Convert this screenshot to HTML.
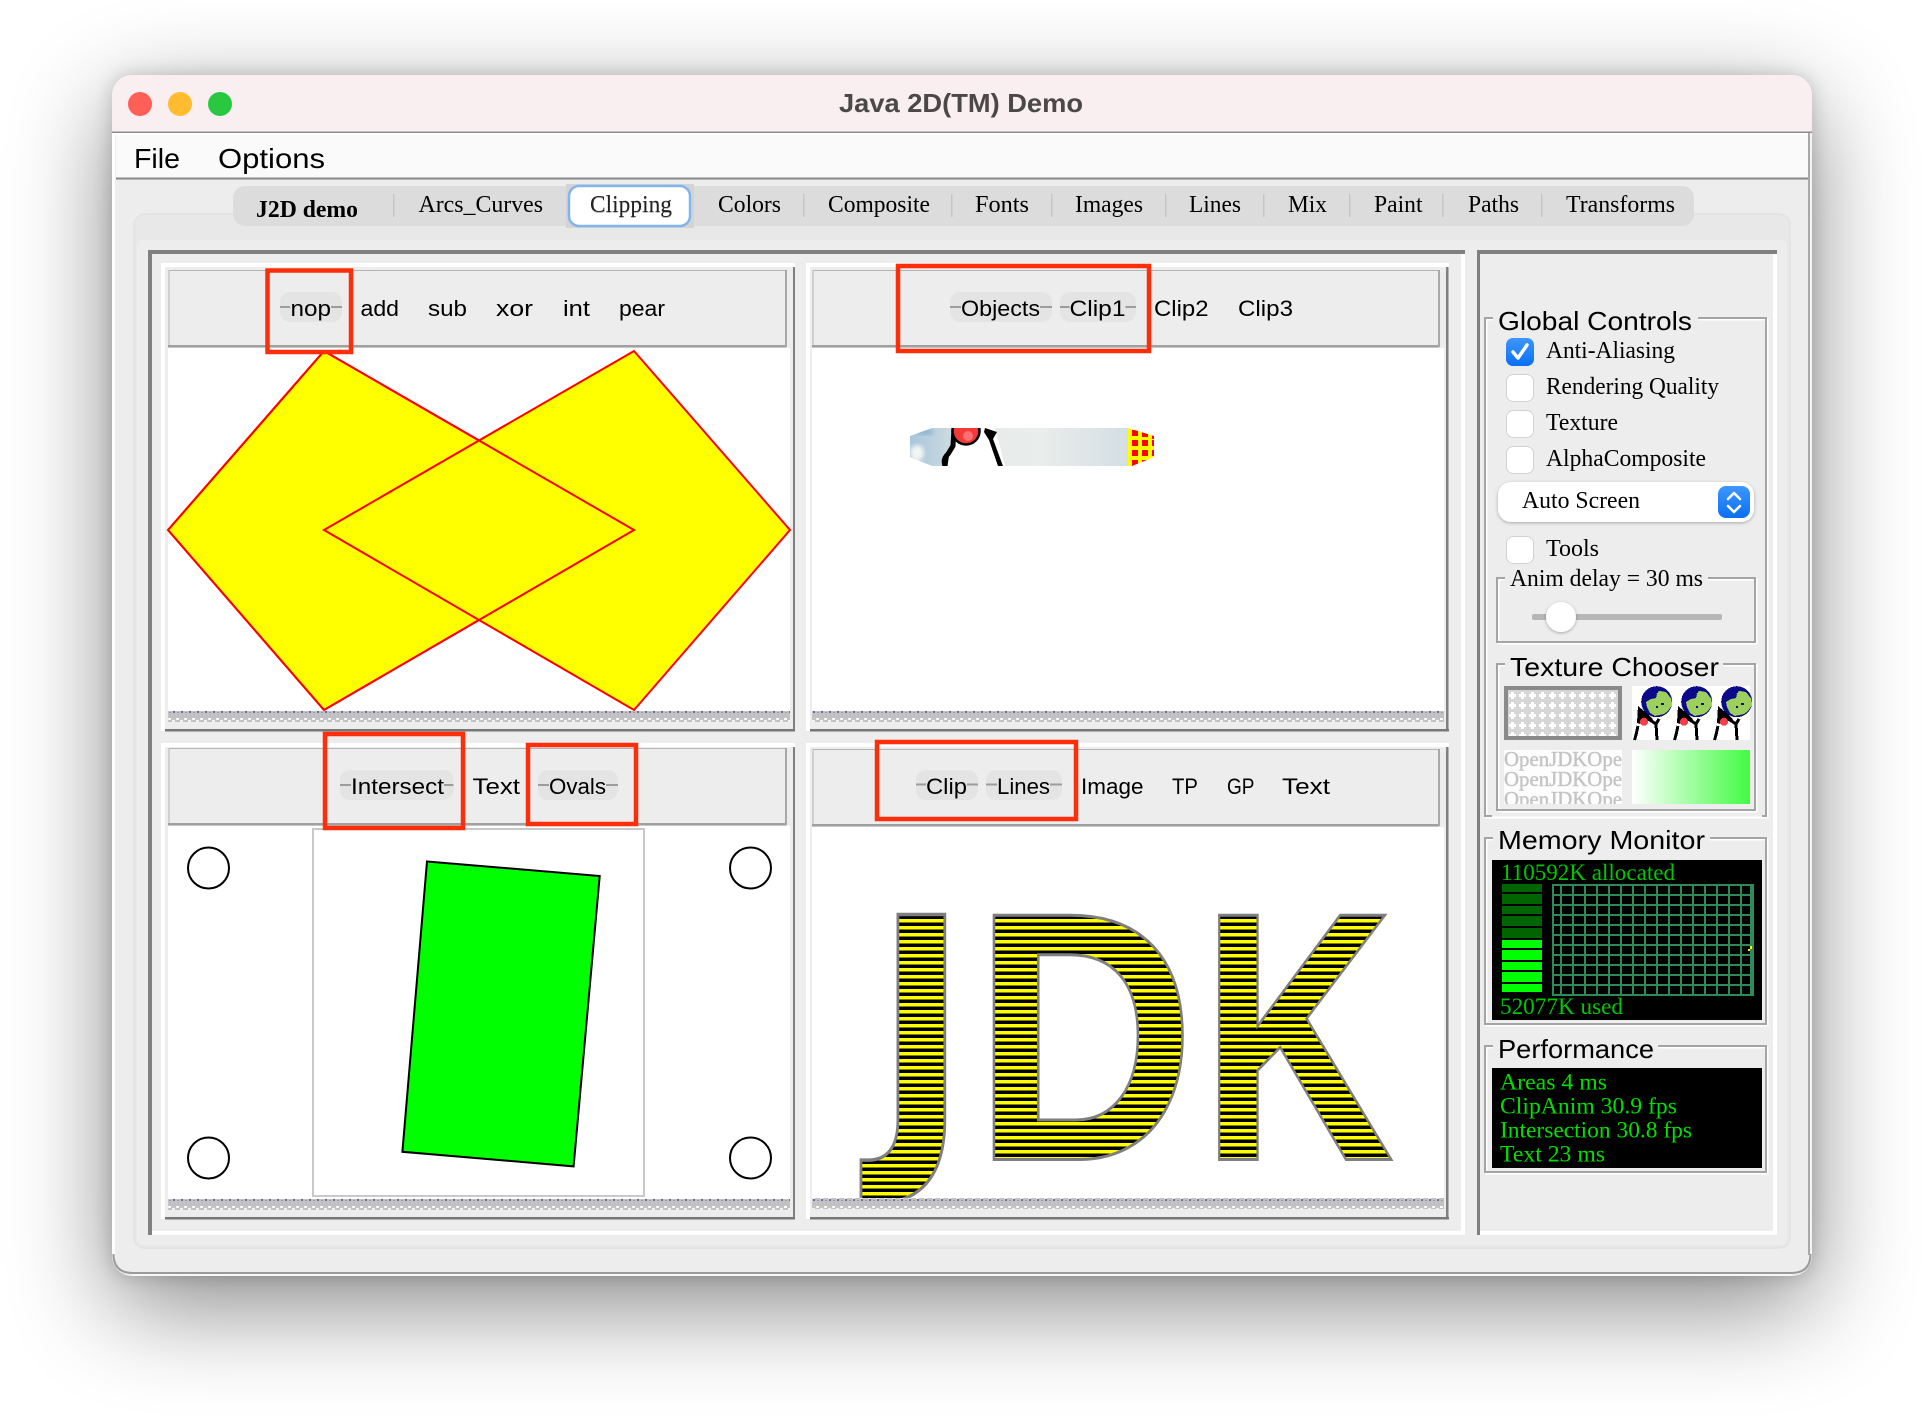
<!DOCTYPE html>
<html><head><meta charset="utf-8"><title>Java 2D(TM) Demo</title>
<style>
html,body{margin:0;padding:0;background:#fff;width:1924px;height:1424px;overflow:hidden}
#win{position:absolute;left:112px;top:75px;width:1700px;height:1201px;border-radius:20px;background:#ededed;box-shadow:0 30px 100px rgba(0,0,0,.47),0 0 18px rgba(0,0,0,.18)}
svg{position:absolute;left:0;top:0}
text{white-space:pre}
.s{font-family:"Liberation Sans",sans-serif;fill:#000}
.r{font-family:"Liberation Serif",serif;fill:#000}
.t{font-size:24px}
.b{font-size:22.5px}
.g{font-size:26px}
.c{font-size:24px}
.gr{font-size:23px;fill:#00c800}
.pf{font-size:23px;fill:#00e000}
.dj{font-family:"DejaVu Sans",sans-serif;font-weight:bold}
</style></head><body>
<div id="win"></div>
<svg width="1924" height="1424" viewBox="0 0 1924 1424" xmlns="http://www.w3.org/2000/svg">
<defs>
<pattern id="bar" patternUnits="userSpaceOnUse" x="168" y="0" width="8" height="11">
<rect width="8" height="11" fill="#c2c2c2"/>
<rect x="0" y="3" width="3" height="2" fill="#fff"/><rect x="4" y="5" width="3" height="2" fill="#f2f2f2"/>
<rect x="5" y="7" width="2" height="2" fill="#6a6a9e"/><rect x="1" y="8" width="2" height="1" fill="#9a9aba"/>
</pattern>
<pattern id="barB" patternUnits="userSpaceOnUse" x="168" y="4" width="8" height="11">
<rect width="8" height="11" fill="#c2c2c2"/>
<rect x="0" y="3" width="3" height="2" fill="#fff"/><rect x="4" y="5" width="3" height="2" fill="#f2f2f2"/>
<rect x="5" y="7" width="2" height="2" fill="#6a6a9e"/><rect x="1" y="8" width="2" height="1" fill="#9a9aba"/>
</pattern>
<pattern id="stripes" patternUnits="userSpaceOnUse" x="0" y="915.500" width="10" height="7">
<rect width="10" height="7" fill="#ffff00"/><rect width="10" height="3.500" fill="#000"/>
</pattern>
<pattern id="grid" patternUnits="userSpaceOnUse" x="1560" y="884" width="12" height="10">
<rect x="0" y="0" width="2" height="10" fill="#2e8b57"/><rect x="0" y="0" width="12" height="2" fill="#2e8b57"/>
</pattern>
<pattern id="plus" patternUnits="userSpaceOnUse" x="1508" y="690" width="10" height="10">
<rect width="10" height="10" fill="#d6d6d6"/>
<rect x="3" y="2" width="3" height="7" fill="#fff"/><rect x="1" y="4" width="7" height="3" fill="#fff"/>
</pattern>
<linearGradient id="sky" x1="0" x2="1" y1="0" y2="0">
<stop offset="0" stop-color="#a9c6dc"/><stop offset=".13" stop-color="#c0d4de"/><stop offset=".3" stop-color="#e6ebea"/><stop offset=".6" stop-color="#e9edeb"/><stop offset="1" stop-color="#d4dfe3"/>
</linearGradient>
<linearGradient id="blueb" x1="0" x2="0" y1="0" y2="1"><stop offset="0" stop-color="#3d97ff"/><stop offset="1" stop-color="#0a6ff2"/></linearGradient>
<linearGradient id="gg" x1="0" x2="1" y1="0" y2="0"><stop offset="0" stop-color="#fff"/><stop offset="1" stop-color="#42fb42"/></linearGradient>
<clipPath id="strip"><polygon points="910,436 932,428 1128,428 1154,436 1154,457 1132,466 932,466 910,457"/></clipPath>
<clipPath id="tx3"><rect x="1504" y="750" width="118" height="54"/></clipPath>
<clipPath id="jdkc"><rect x="812" y="826" width="632" height="372"/></clipPath>
<clipPath id="jdkt">
<text class="dj" font-size="312" transform="translate(875,1142) scale(.8,1)">J</text>
<text class="s" font-weight="bold" font-size="355" transform="translate(973.4,1159.5) scale(.866,1)">D</text>
<text class="s" font-weight="bold" font-size="355" transform="translate(1201.4,1159.5) scale(.75,1)">K</text>
</clipPath>
<filter id="sh" x="-20%" y="-30%" width="140%" height="170%"><feDropShadow dx="0" dy="1" stdDeviation="1.5" flood-color="#000" flood-opacity=".3"/></filter>
<filter id="bl"><feGaussianBlur stdDeviation="2"/></filter>
<g id="gd" shape-rendering="crispEdges">
<circle cx="1656.700" cy="701.700" r="15.500" fill="#0a0a8a"/>
<path d="M1660 691l6 1 5.500 7 .5 6-4 6-4 3-9 2-5-3-3-6-1-5 5-3 5-1 1-4-1-2z" fill="#9ccf5c"/>
<path d="M1653 690h5v3h-5zM1661 703h3v2h-3zM1656 706h2v2h-2z" fill="#0a0a8a"/>
<path d="M1638 706l6 5 8 7 2 4-12-2-2 4-3-1z" fill="#000"/>
<path d="M1638 726l-2 9-1.500 5" fill="none" stroke="#000" stroke-width="3"/>
<path d="M1650 720l6 4 1 16M1656 724l3-5" fill="none" stroke="#000" stroke-width="3"/>
<circle cx="1644" cy="721.700" r="4" fill="#fa3c46"/>
</g>
</defs>

<!-- title bar -->
<path d="M112 133V95a20 20 0 0 1 20-20H1792a20 20 0 0 1 20 20V133z" fill="#f9eef0"/>
<rect x="112" y="131.500" width="1700" height="1.500" fill="#8e8a8b"/>
<circle cx="140" cy="104" r="12" fill="#fe5f57"/><circle cx="180" cy="104" r="12" fill="#febc2e"/><circle cx="220" cy="104" r="12" fill="#28c840"/>
<text class="s" x="839" y="112" font-size="26" font-weight="bold" style="fill:#4b4848" textLength="244" lengthAdjust="spacingAndGlyphs">Java 2D(TM) Demo</text>

<!-- menu -->
<rect x="112" y="133" width="3" height="1122" fill="#fff"/><rect x="1808" y="133" width="2" height="1122" fill="#a8a8a8"/><rect x="1810" y="133" width="2" height="1122" fill="#f4f4f4"/>
<rect x="115" y="133" width="1693" height="2" fill="#fff"/>
<rect x="116" y="135" width="1692" height="43" fill="#fafafa"/>
<rect x="116" y="177.500" width="1692" height="2" fill="#888"/>
<text class="s" x="134" y="168" font-size="28" textLength="46" lengthAdjust="spacingAndGlyphs">File</text>
<text class="s" x="218" y="168" font-size="28" textLength="107" lengthAdjust="spacingAndGlyphs">Options</text>

<!-- tab pane -->
<rect x="133" y="213" width="1658" height="1036" rx="12" fill="#e4e4e4"/>
<rect x="135" y="215" width="1654" height="1032" rx="10" fill="#e8e8e8"/>
<rect x="137" y="240" width="1650" height="1005" rx="6" fill="#ededed"/>
<rect x="233" y="186" width="1461" height="40" rx="12" fill="#dcdcdc"/>
<g fill="#c6c6c6">
<rect x="393" y="194" width="1.500" height="23"/><rect x="803" y="194" width="1.500" height="23"/><rect x="951" y="194" width="1.500" height="23"/><rect x="1051" y="194" width="1.500" height="23"/><rect x="1165" y="194" width="1.500" height="23"/><rect x="1263" y="194" width="1.500" height="23"/><rect x="1349" y="194" width="1.500" height="23"/><rect x="1442" y="194" width="1.500" height="23"/><rect x="1541" y="194" width="1.500" height="23"/>
</g>
<rect x="566" y="184" width="128" height="44" fill="#d4d4d4"/>
<rect x="569" y="186" width="121" height="40" rx="10" fill="#fff" stroke="#82b5ee" stroke-width="2.500"/>
<g class="t">
<text class="r t" x="256" y="217" font-weight="bold" textLength="102" lengthAdjust="spacingAndGlyphs">J2D demo</text>
<text class="r t" x="418.500" y="212" textLength="124.500" lengthAdjust="spacingAndGlyphs">Arcs_Curves</text>
<text class="r t" x="590" y="213" style="fill:#bbb" textLength="82" lengthAdjust="spacingAndGlyphs">Clipping</text>
<text class="r t" x="590" y="212" style="fill:#222" textLength="82" lengthAdjust="spacingAndGlyphs">Clipping</text>
<text class="r t" x="718" y="212" textLength="63" lengthAdjust="spacingAndGlyphs">Colors</text>
<text class="r t" x="828" y="212" textLength="102" lengthAdjust="spacingAndGlyphs">Composite</text>
<text class="r t" x="975" y="212" textLength="54" lengthAdjust="spacingAndGlyphs">Fonts</text>
<text class="r t" x="1075" y="212" textLength="68" lengthAdjust="spacingAndGlyphs">Images</text>
<text class="r t" x="1189" y="212" textLength="52" lengthAdjust="spacingAndGlyphs">Lines</text>
<text class="r t" x="1288" y="212" textLength="39" lengthAdjust="spacingAndGlyphs">Mix</text>
<text class="r t" x="1374" y="212" textLength="48.500" lengthAdjust="spacingAndGlyphs">Paint</text>
<text class="r t" x="1468" y="212" textLength="51" lengthAdjust="spacingAndGlyphs">Paths</text>
<text class="r t" x="1566" y="212" textLength="109" lengthAdjust="spacingAndGlyphs">Transforms</text>
</g>

<!-- left panel bevel -->
<rect x="148" y="250" width="1317" height="4" fill="#808080"/>
<rect x="148" y="250" width="4" height="985" fill="#808080"/>
<rect x="152" y="1231" width="1313" height="4" fill="#fff"/>
<rect x="1461" y="254" width="4" height="981" fill="#fff"/>
<!-- right panel bevel -->
<rect x="1477" y="250" width="300" height="4" fill="#808080"/>
<rect x="1477" y="250" width="3" height="985" fill="#808080"/>
<rect x="1480" y="1231" width="297" height="4" fill="#fff"/>
<rect x="1773" y="254" width="4" height="981" fill="#fff"/>

<!-- cell TL -->
<rect x="161" y="263" width="634" height="4" fill="#fff"/><rect x="161" y="263" width="4" height="468" fill="#fff"/>
<rect x="793" y="267" width="2" height="464" fill="#808080"/><rect x="165" y="729" width="630" height="2.500" fill="#777"/>
<rect x="169" y="270.500" width="617" height="75" fill="#ededed" stroke="#b4b4b4" stroke-width="1"/>
<rect x="168" y="345" width="618" height="2.500" fill="#a0a0a0"/><rect x="785" y="270" width="2" height="77" fill="#a8a8a8"/>
<rect x="168" y="348" width="622" height="363" fill="#fff"/>
<rect x="168" y="711" width="622" height="11" fill="url(#bar)"/>
<polygon points="324,351 168,530 324,710 634,530" fill="#ff0" stroke="#f00" stroke-width="2"/>
<polygon points="634,351 790,530 634,710 324,530" fill="#ff0" stroke="#f00" stroke-width="2"/>
<polyline points="324,351 168,530 324,710 634,530 324,351" fill="none" stroke="#f00" stroke-width="2"/>

<!-- cell TR -->
<rect x="806" y="263" width="643" height="4" fill="#fff"/><rect x="806" y="263" width="4" height="468" fill="#fff"/>
<rect x="1446" y="267" width="2.500" height="464" fill="#808080"/><rect x="810" y="729" width="639" height="2.500" fill="#777"/>
<rect x="813" y="270.500" width="626" height="75" fill="#ededed" stroke="#b4b4b4" stroke-width="1"/>
<rect x="812" y="345" width="627" height="2.500" fill="#a0a0a0"/><rect x="1438" y="270" width="2" height="77" fill="#a8a8a8"/>
<rect x="812" y="348" width="632" height="363" fill="#fff"/>
<rect x="812" y="711" width="632" height="11" fill="url(#bar)"/>
<g clip-path="url(#strip)">
<rect x="910" y="428" width="218" height="38" fill="url(#sky)"/>
<ellipse cx="917" cy="453" rx="7" ry="8" fill="#f2f5f6" filter="url(#bl)"/>
<ellipse cx="925" cy="432" rx="9" ry="3" fill="#8fb4d2" filter="url(#bl)"/>
<path d="M945 466L958 428H995L1005 466z" fill="#fff"/>
<path d="M945 466c-2-6 0-9 3-12l5-8 1-18" fill="none" stroke="#000" stroke-width="5"/>
<path d="M948 452l-2 14" stroke="#000" stroke-width="3" fill="none"/>
<path d="M985 428l12 4-4 7 10 27h-5l-9-26-5-8z" fill="#000"/>
<circle cx="966" cy="431" r="13.500" fill="#f23a3a" stroke="#000" stroke-width="2.500"/>
<circle cx="968" cy="436" r="5" fill="#fb7070"/>
<rect x="1128" y="428" width="26" height="38" fill="#ff0"/>
<g fill="#f00">
<rect x="1132" y="430" width="6" height="6"/><rect x="1142" y="432" width="6" height="5"/><rect x="1152" y="434" width="3" height="5"/>
<rect x="1132" y="440" width="6" height="6"/><rect x="1142" y="440" width="6" height="6"/><rect x="1152" y="440" width="3" height="6"/>
<rect x="1132" y="450" width="6" height="6"/><rect x="1142" y="450" width="6" height="6"/><rect x="1152" y="450" width="3" height="6"/>
<rect x="1132" y="460" width="6" height="6"/><rect x="1142" y="460" width="6" height="6"/>
</g>
</g>

<!-- cell BL -->
<rect x="161" y="743" width="634" height="4" fill="#fff"/><rect x="161" y="743" width="4" height="476" fill="#fff"/>
<rect x="793" y="747" width="2" height="472" fill="#808080"/><rect x="165" y="1217" width="630" height="2.500" fill="#777"/>
<rect x="169" y="748.500" width="617" height="75" fill="#ededed" stroke="#b4b4b4" stroke-width="1"/>
<rect x="168" y="823" width="618" height="2.500" fill="#a0a0a0"/><rect x="785" y="748" width="2" height="77" fill="#a8a8a8"/>
<rect x="168" y="826" width="622" height="373" fill="#fff"/>
<rect x="168" y="1199" width="622" height="11" fill="url(#barB)"/>
<rect x="313" y="829" width="331" height="367" fill="#fff" stroke="#c8c8c8" stroke-width="2"/>
<polygon points="427,861.500 599.700,876 573.600,1166.400 402.400,1151.800" fill="#0f0" stroke="#000" stroke-width="2"/>
<g fill="#fff" stroke="#000" stroke-width="2">
<circle cx="208.500" cy="868" r="20.500"/><circle cx="750.500" cy="868" r="20.500"/><circle cx="208.500" cy="1158" r="20.500"/><circle cx="750.500" cy="1158" r="20.500"/>
</g>

<!-- cell BR -->
<rect x="806" y="743" width="643" height="4" fill="#fff"/><rect x="806" y="743" width="4" height="476" fill="#fff"/>
<rect x="1446" y="747" width="2.500" height="472" fill="#808080"/><rect x="810" y="1217" width="639" height="2.500" fill="#777"/>
<rect x="813" y="749.500" width="626" height="75" fill="#ededed" stroke="#b4b4b4" stroke-width="1"/>
<rect x="812" y="824" width="627" height="2.500" fill="#a0a0a0"/><rect x="1438" y="749" width="2" height="77" fill="#a8a8a8"/>
<rect x="812" y="827" width="632" height="371" fill="#fff"/>
<rect x="812" y="1198" width="632" height="11" fill="url(#barB)"/>
<g clip-path="url(#jdkc)">
<rect x="812" y="860" width="632" height="340" fill="url(#stripes)" clip-path="url(#jdkt)"/>
<text class="dj" style="fill:none" stroke="#7f7f7f" font-size="312" stroke-width="3.500" transform="translate(875,1142) scale(.8,1)">J</text>
<text class="s" style="fill:none" stroke="#7f7f7f" font-weight="bold" font-size="355" stroke-width="3" transform="translate(973.4,1159.5) scale(.866,1)">D</text>
<text class="s" style="fill:none" stroke="#7f7f7f" font-weight="bold" font-size="355" stroke-width="3" transform="translate(1201.4,1159.5) scale(.75,1)">K</text>
</g>

<!-- pills -->
<g fill="#e4e4e4">
<rect x="280" y="292" width="62" height="30" rx="10"/>
<rect x="950" y="292" width="102" height="30" rx="10"/>
<rect x="1060" y="292" width="76" height="30" rx="10"/>
<rect x="340" y="770" width="113.500" height="30" rx="10"/>
<rect x="538" y="770" width="80" height="30" rx="10"/>
<rect x="916" y="770" width="62" height="30" rx="10"/>
<rect x="986" y="770" width="76" height="30" rx="10"/>
</g>
<g fill="#9c9c9c">
<rect x="280" y="306" width="10" height="2"/><rect x="331" y="306" width="11" height="2"/>
<rect x="950" y="306" width="11" height="2"/><rect x="1040" y="306" width="12" height="2"/>
<rect x="1060" y="306" width="9.500" height="2"/><rect x="1125.500" y="306" width="10.500" height="2"/>
<rect x="340" y="784" width="11" height="2"/><rect x="444" y="784" width="9.500" height="2"/>
<rect x="538" y="784" width="11" height="2"/><rect x="606" y="784" width="12" height="2"/>
<rect x="916" y="783.500" width="10" height="2"/><rect x="967" y="783.500" width="11" height="2"/>
<rect x="986" y="783.500" width="11" height="2"/><rect x="1050" y="783.500" width="12" height="2"/>
</g>
<g class="s b">
<text class="s b" x="290.500" y="316" textLength="40.500" lengthAdjust="spacingAndGlyphs">nop</text>
<text class="s b" x="360.500" y="316" textLength="38.500" lengthAdjust="spacingAndGlyphs">add</text>
<text class="s b" x="428" y="316" textLength="39" lengthAdjust="spacingAndGlyphs">sub</text>
<text class="s b" x="496" y="316" textLength="37" lengthAdjust="spacingAndGlyphs">xor</text>
<text class="s b" x="563" y="316" textLength="27" lengthAdjust="spacingAndGlyphs">int</text>
<text class="s b" x="619" y="316" textLength="46" lengthAdjust="spacingAndGlyphs">pear</text>
<text class="s b" x="961" y="316" textLength="79" lengthAdjust="spacingAndGlyphs">Objects</text>
<text class="s b" x="1069.500" y="316" textLength="56" lengthAdjust="spacingAndGlyphs">Clip1</text>
<text class="s b" x="1154" y="316" textLength="54.500" lengthAdjust="spacingAndGlyphs">Clip2</text>
<text class="s b" x="1238" y="316" textLength="55" lengthAdjust="spacingAndGlyphs">Clip3</text>
<text class="s b" x="351" y="794" textLength="93" lengthAdjust="spacingAndGlyphs">Intersect</text>
<text class="s b" x="472.500" y="794" textLength="47.500" lengthAdjust="spacingAndGlyphs">Text</text>
<text class="s b" x="549" y="794" textLength="57" lengthAdjust="spacingAndGlyphs">Ovals</text>
<text class="s b" x="926" y="794" textLength="41" lengthAdjust="spacingAndGlyphs">Clip</text>
<text class="s b" x="997" y="794" textLength="53" lengthAdjust="spacingAndGlyphs">Lines</text>
<text class="s b" x="1081" y="794" textLength="62.500" lengthAdjust="spacingAndGlyphs">Image</text>
<text class="s b" x="1172" y="794" textLength="26" lengthAdjust="spacingAndGlyphs">TP</text>
<text class="s b" x="1227" y="794" textLength="27.500" lengthAdjust="spacingAndGlyphs">GP</text>
<text class="s b" x="1282" y="794" textLength="48" lengthAdjust="spacingAndGlyphs">Text</text>
</g>

<!-- red annotation boxes -->
<g fill="none" stroke="#ff2e0a" stroke-width="4.500">
<rect x="267.500" y="270.500" width="83.500" height="81.500"/>
<rect x="898" y="266" width="251" height="85"/>
<rect x="325" y="734" width="138" height="94"/>
<rect x="528" y="745" width="108" height="79"/>
<rect x="877" y="742" width="199" height="77"/>
</g>

<!-- Global Controls -->
<rect x="1486.500" y="319.500" width="281" height="498" fill="none" stroke="#fff" stroke-width="2"/>
<rect x="1485" y="318" width="281" height="498" fill="none" stroke="#a4a4a4" stroke-width="2"/>
<rect x="1493" y="312" width="205" height="12" fill="#ededed"/>
<rect x="1492" y="814" width="270" height="6" fill="#ededed"/><rect x="1492" y="816.500" width="270" height="2" fill="#fff"/>
<text class="s g" x="1498" y="330" textLength="194" lengthAdjust="spacingAndGlyphs">Global Controls</text>
<rect x="1506" y="338" width="28" height="28" rx="7" fill="url(#blueb)"/>
<path d="M1513 352l5 6 9-13" fill="none" stroke="#fff" stroke-width="3.500" stroke-linecap="round" stroke-linejoin="round"/>
<g fill="#fff" stroke="#d2d2d2" stroke-width="1">
<rect x="1506.500" y="374.500" width="27" height="27" rx="7"/>
<rect x="1506.500" y="410.500" width="27" height="27" rx="7"/>
<rect x="1506.500" y="446.500" width="27" height="27" rx="7"/>
<rect x="1506.500" y="536.500" width="27" height="27" rx="7"/>
</g>
<text class="r c" x="1546" y="358" textLength="129" lengthAdjust="spacingAndGlyphs">Anti-Aliasing</text>
<text class="r c" x="1546" y="394" textLength="173" lengthAdjust="spacingAndGlyphs">Rendering Quality</text>
<text class="r c" x="1546" y="430" textLength="72" lengthAdjust="spacingAndGlyphs">Texture</text>
<text class="r c" x="1546" y="466" textLength="160" lengthAdjust="spacingAndGlyphs">AlphaComposite</text>
<text class="r c" x="1546" y="556" textLength="53" lengthAdjust="spacingAndGlyphs">Tools</text>
<rect x="1498" y="482" width="256" height="40" rx="13" fill="#fff" filter="url(#sh)"/>
<text class="r c" x="1522" y="508" textLength="118" lengthAdjust="spacingAndGlyphs">Auto Screen</text>
<rect x="1718" y="486" width="32" height="32" rx="8" fill="url(#blueb)"/>
<path d="M1728 499l6-6 6 6M1728 506l6 6 6-6" fill="none" stroke="#fff" stroke-width="2.500" stroke-linecap="round" stroke-linejoin="round"/>

<!-- Anim delay -->
<rect x="1498.500" y="579.500" width="258" height="64" fill="none" stroke="#fff" stroke-width="2"/>
<rect x="1497" y="578" width="258" height="64" fill="none" stroke="#a4a4a4" stroke-width="2"/>
<rect x="1505" y="572" width="203" height="12" fill="#ededed"/>
<text class="r c" x="1510" y="586" textLength="193" lengthAdjust="spacingAndGlyphs">Anim delay = 30 ms</text>
<rect x="1532" y="614" width="190" height="6" rx="2" fill="#b6b6b6"/>
<circle cx="1561" cy="617" r="15" fill="#fff" filter="url(#sh)"/>

<!-- Texture Chooser -->
<rect x="1498.500" y="665.500" width="258" height="146" fill="none" stroke="#fff" stroke-width="2"/>
<rect x="1497" y="664" width="258" height="146" fill="none" stroke="#a4a4a4" stroke-width="2"/>
<rect x="1505" y="656" width="218" height="14" fill="#ededed"/>
<text class="s g" x="1510" y="676" textLength="209" lengthAdjust="spacingAndGlyphs">Texture Chooser</text>
<rect x="1504" y="686" width="118" height="54" fill="#8a8a8a"/>
<rect x="1508" y="690" width="110" height="46" fill="url(#plus)"/>
<rect x="1632" y="686" width="118" height="54" fill="#fff"/>
<use href="#gd"/><use href="#gd" x="40"/><use href="#gd" x="80"/>
<rect x="1504" y="750" width="118" height="54" fill="#fdfdfd"/>
<g clip-path="url(#tx3)" style="font-family:'Liberation Serif',serif;font-size:21px">
<text x="1504" y="766" textLength="118" lengthAdjust="spacingAndGlyphs" style="fill:#c4c4c4" stroke="#c4c4c4" stroke-width=".4">OpenJDKOpe</text>
<text x="1504" y="786" textLength="118" lengthAdjust="spacingAndGlyphs" style="fill:#c4c4c4" stroke="#c4c4c4" stroke-width=".4">OpenJDKOpe</text>
<text x="1504" y="806" textLength="118" lengthAdjust="spacingAndGlyphs" style="fill:#c4c4c4" stroke="#c4c4c4" stroke-width=".4">OpenJDKOpe</text>
</g>
<rect x="1632" y="750" width="118" height="54" fill="url(#gg)"/>

<!-- Memory Monitor -->
<rect x="1486.500" y="839.500" width="281" height="186" fill="none" stroke="#fff" stroke-width="2"/>
<rect x="1485" y="838" width="281" height="186" fill="none" stroke="#a4a4a4" stroke-width="2"/>
<rect x="1493" y="830" width="217" height="14" fill="#ededed"/>
<text class="s g" x="1498" y="849" textLength="207" lengthAdjust="spacingAndGlyphs">Memory Monitor</text>
<rect x="1492" y="860" width="270" height="160" fill="#000"/>
<text class="r gr" x="1501" y="880" textLength="174" lengthAdjust="spacingAndGlyphs">110592K allocated</text>
<text class="r gr" x="1500" y="1014" textLength="123" lengthAdjust="spacingAndGlyphs">52077K used</text>
<g fill="#006400">
<rect x="1502" y="884" width="40" height="8"/><rect x="1502" y="894" width="40" height="10"/><rect x="1502" y="906" width="40" height="8"/><rect x="1502" y="916" width="40" height="10"/><rect x="1502" y="928" width="40" height="10"/>
</g>
<g fill="#00ff00">
<rect x="1502" y="940" width="40" height="8"/><rect x="1502" y="950" width="40" height="10"/><rect x="1502" y="962" width="40" height="8"/><rect x="1502" y="972" width="40" height="10"/><rect x="1502" y="984" width="40" height="8"/>
</g>
<rect x="1552" y="884" width="202" height="112" fill="url(#grid)"/>
<rect x="1552" y="884" width="2" height="112" fill="#2e8b57"/>
<rect x="1552" y="994" width="202" height="2" fill="#2e8b57"/>
<rect x="1750" y="884" width="4" height="112" fill="#2e8b57"/>
<path d="M1748 949h2v-3h2v3h-2v2h-2z" fill="#ff0"/>

<!-- Performance -->
<rect x="1486.500" y="1047.500" width="281" height="126" fill="none" stroke="#fff" stroke-width="2"/>
<rect x="1485" y="1046" width="281" height="126" fill="none" stroke="#a4a4a4" stroke-width="2"/>
<rect x="1493" y="1038" width="165" height="14" fill="#ededed"/>
<text class="s g" x="1498" y="1058" textLength="156" lengthAdjust="spacingAndGlyphs">Performance</text>
<rect x="1492" y="1068" width="270" height="100" fill="#000"/>
<text class="r pf" x="1500" y="1089.500" textLength="107" lengthAdjust="spacingAndGlyphs">Areas 4 ms</text>
<text class="r pf" x="1500" y="1113.500" textLength="177" lengthAdjust="spacingAndGlyphs">ClipAnim 30.9 fps</text>
<text class="r pf" x="1500" y="1137.500" textLength="192" lengthAdjust="spacingAndGlyphs">Intersection 30.8 fps</text>
<text class="r pf" x="1500" y="1161.500" textLength="105" lengthAdjust="spacingAndGlyphs">Text 23 ms</text>

<!-- window bottom edge -->
<path d="M113.500 1254Q113.500 1273 133 1273H1791Q1810.500 1273 1810.500 1254" fill="none" stroke="#9a9a9a" stroke-width="2"/>
<rect x="132" y="1274" width="1660" height="2" fill="#f8f8f8"/>
</svg>
</body></html>
